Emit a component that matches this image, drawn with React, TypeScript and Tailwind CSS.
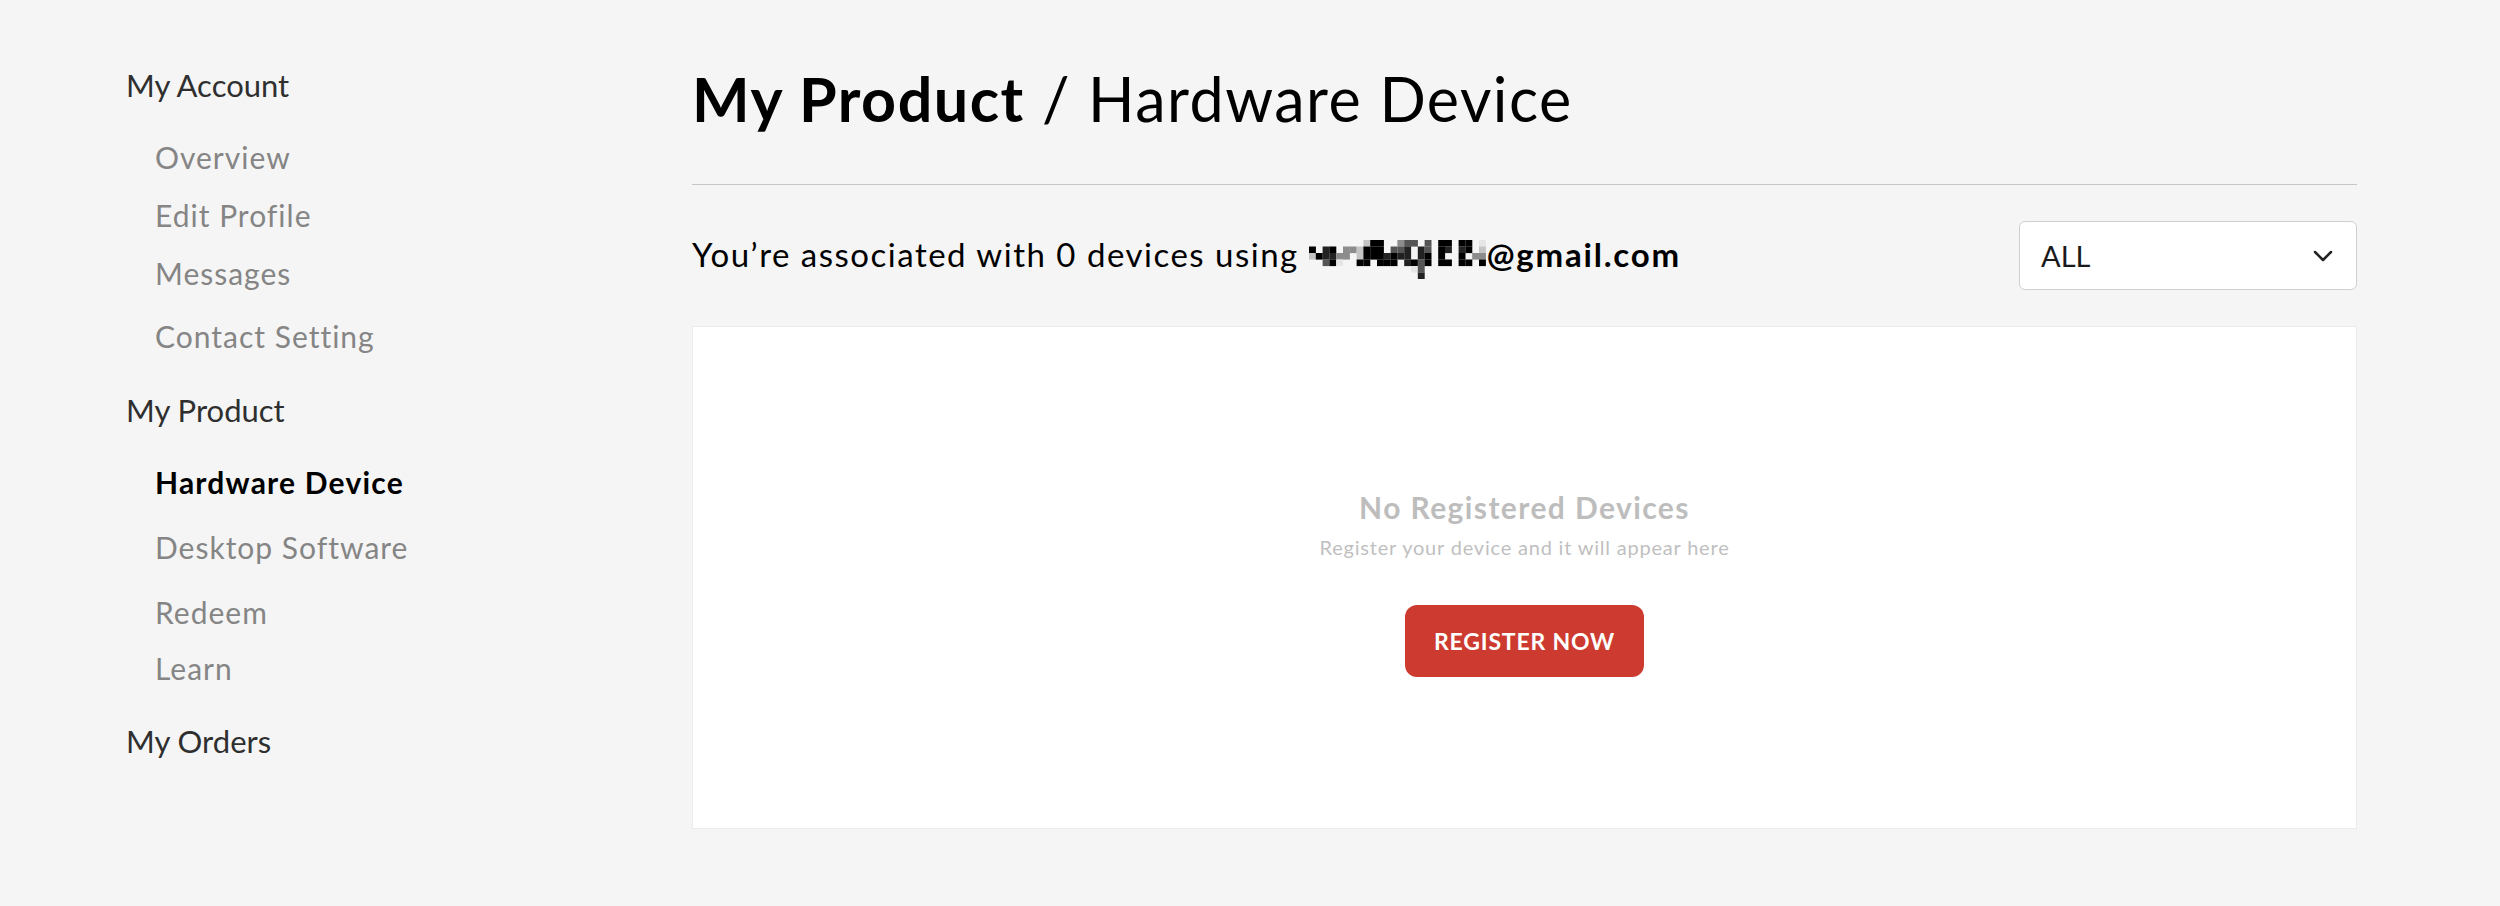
import React from "react";

const font = { fontFamily: "Lato, 'Noto Sans', sans-serif" };

type NavItem = { label: string; kind: "head" | "item" | "active"; gap: string };

const navItems: NavItem[] = [
  { label: "My Account", kind: "head", gap: "mt-0" },
  { label: "Overview", kind: "item", gap: "mt-[41px]" },
  { label: "Edit Profile", kind: "item", gap: "mt-[28px]" },
  { label: "Messages", kind: "item", gap: "mt-[28px]" },
  { label: "Contact Setting", kind: "item", gap: "mt-[33px]" },
  { label: "My Product", kind: "head", gap: "mt-[44px]" },
  { label: "Hardware Device", kind: "active", gap: "mt-[41px]" },
  { label: "Desktop Software", kind: "item", gap: "mt-[35px]" },
  { label: "Redeem", kind: "item", gap: "mt-[35px]" },
  { label: "Learn", kind: "item", gap: "mt-[26px]" },
  { label: "My Orders", kind: "head", gap: "mt-[43px]" },
];

// pixelated (censored) part of the email address
const mosaicRows = [
  "........bff..cdd.d.ff.ff.a",
  "f.ef.ccbfff.dde.ed.fe.ef.b",
  "bfeecc.bfffefee.ef.f..f.cc",
  "..dfa..ff.fff.efdf.ff.ff.f",
  "...............ad.........",
  "................e.........",
];

const shades: Record<string, string> = {
  a: "#e6e6e6",
  b: "#c4c4c4",
  c: "#8c8c8c",
  d: "#555555",
  e: "#222222",
  f: "#000000",
};

const Mosaic: React.FC = () => (
  <svg width="177" height="39" viewBox="0 0 177 39" className="inline-block align-[-12px] mr-[1px]">
    {mosaicRows.map((row, r) =>
      row.split("").map((ch, c) =>
        ch === "." ? null : (
          <rect key={`${r}-${c}`} x={c * 6.8} y={r * 6.5} width="6.9" height="6.6" fill={shades[ch]} />
        )
      )
    )}
  </svg>
);

const Sidebar: React.FC = () => (
  <aside className="w-[566px] shrink-0 pt-[2px]">
    <ul className="flex flex-col">
      {navItems.map((n) => (
        <li
          key={n.label}
          className={`${n.gap} leading-none ${
            n.kind === "head"
              ? "text-[31px] text-[#2f2f2f]"
              : n.kind === "active"
              ? "pl-[29px] text-[30px] tracking-[1.2px] font-bold text-black"
              : "pl-[29px] text-[30px] tracking-[1px] text-[#858585]"
          }`}
        >
          {n.label}
        </li>
      ))}
    </ul>
  </aside>
);

export default function App() {
  return (
    <div className="min-h-screen bg-[#f5f5f5] flex pl-[126px] pt-[68px]" style={font}>
      <Sidebar />

      <main className="w-[1665px]">
        <h1 className="text-[61px] leading-none tracking-[1.5px] text-black border-b border-[#c6c6c6] pb-[55px]">
          <span className="font-bold">My Product</span> / Hardware Device
        </h1>

        <div className="flex items-center justify-between mt-[36px]">
          <p className="mt-[6px] text-[33px] leading-none tracking-[1.5px] text-black whitespace-nowrap">
            You’re associated with 0 devices using <Mosaic />
            <span className="font-bold tracking-[1.8px]">@gmail.com</span>
          </p>
          <button className="w-[338px] h-[69px] bg-white border border-[#cfcfcf] rounded-[6px] flex items-center justify-between pl-[21px] pr-[23px]">
            <span className="text-[29px] leading-none text-[#1a1a1a]">ALL</span>
            <svg width="20" height="12" viewBox="0 0 20 12" fill="none">
              <path d="M2 2 L10 10 L18 2" stroke="#222" strokeWidth="2.5" strokeLinecap="round" strokeLinejoin="round" />
            </svg>
          </button>
        </div>

        <section className="mt-[36px] h-[503px] bg-white border border-[#ebebeb] flex flex-col items-center pt-[165px]">
          <h2 className="text-[30px] leading-none tracking-[1.4px] font-bold text-[#bdbdbd]">No Registered Devices</h2>
          <p className="mt-[15px] text-[20px] leading-none tracking-[0.8px] text-[#bfbfbf]">
            Register your device and it will appear here
          </p>
          <button className="mt-[48px] w-[239px] h-[72px] rounded-[12px] bg-[#cd3a2f] text-white text-[23px] tracking-[0.8px] font-bold">
            REGISTER NOW
          </button>
        </section>
      </main>
    </div>
  );
}
